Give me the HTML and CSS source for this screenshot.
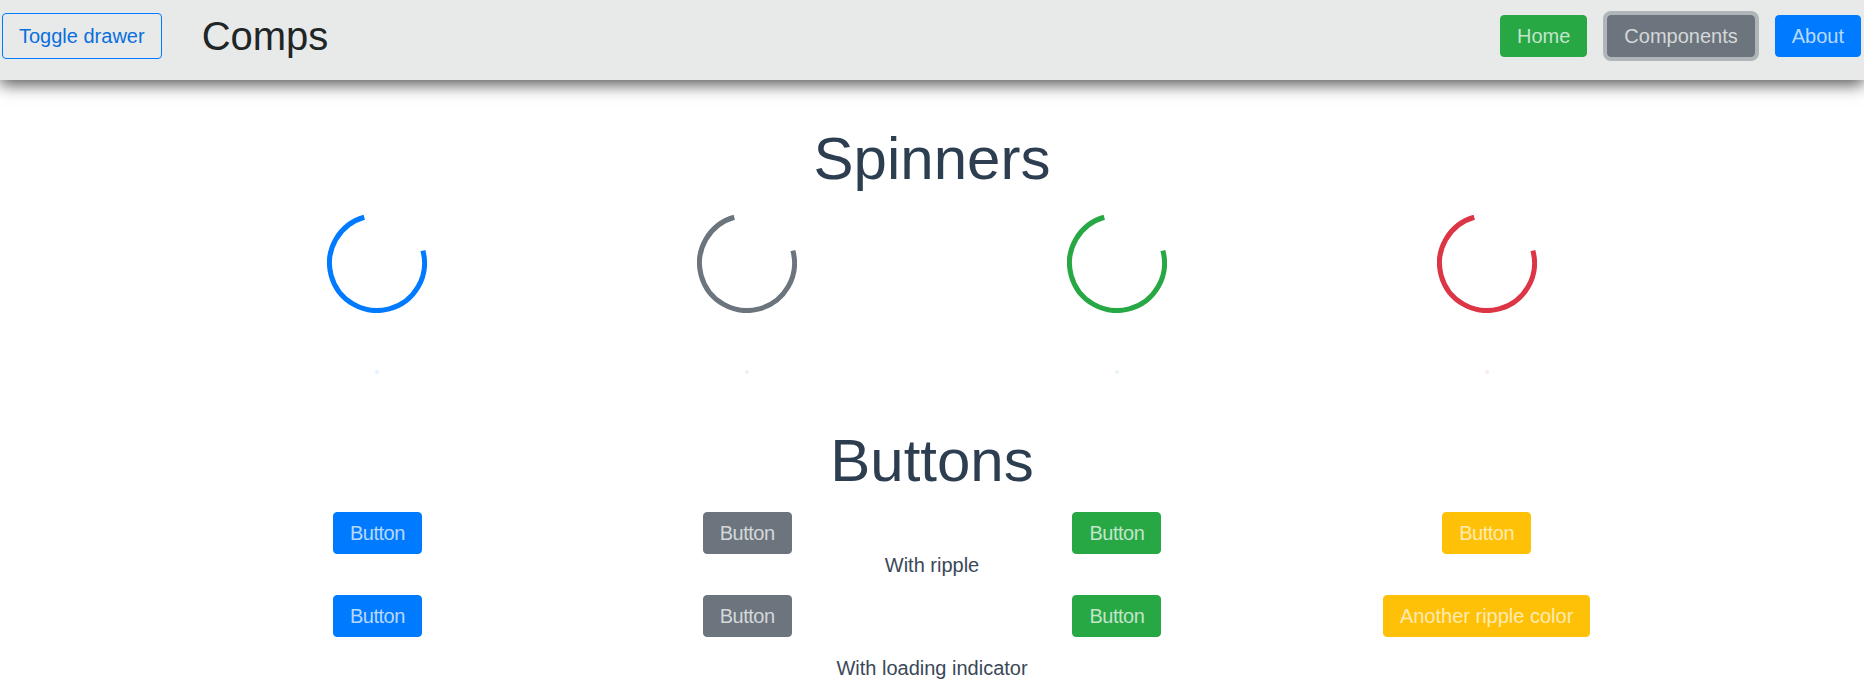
FILE: index.html
```html
<!DOCTYPE html>
<html lang="en">
<head>
<meta charset="utf-8">
<title>Comps</title>
<link rel="stylesheet" href="styles.css">
</head>
<body>
<nav class="navbar">
  <button class="btn btn-outline">Toggle drawer</button>
  <span class="brand">Comps</span>
  <div class="nav-links">
    <button class="btn btn-green">Home</button>
    <button class="btn btn-gray btn-focus">Components</button>
    <button class="btn btn-blue">About</button>
  </div>
</nav>
<main class="main">
  <h1 class="section-title">Spinners</h1>
  <div class="grid spinner-grid">
    <div class="spin-cell">
      <svg class="spinner spin-blue" width="100" height="100" viewBox="0 0 100 100"><circle cx="50" cy="50" r="47.5" transform="rotate(-15 50 50)"/></svg>
      <span class="dot dot-blue"></span>
    </div>
    <div class="spin-cell">
      <svg class="spinner spin-gray" width="100" height="100" viewBox="0 0 100 100"><circle cx="50" cy="50" r="47.5" transform="rotate(-15 50 50)"/></svg>
      <span class="dot dot-gray"></span>
    </div>
    <div class="spin-cell">
      <svg class="spinner spin-green" width="100" height="100" viewBox="0 0 100 100"><circle cx="50" cy="50" r="47.5" transform="rotate(-15 50 50)"/></svg>
      <span class="dot dot-green"></span>
    </div>
    <div class="spin-cell">
      <svg class="spinner spin-red" width="100" height="100" viewBox="0 0 100 100"><circle cx="50" cy="50" r="47.5" transform="rotate(-15 50 50)"/></svg>
      <span class="dot dot-red"></span>
    </div>
  </div>

  <h1 class="section-title buttons-title">Buttons</h1>
  <div class="grid btn-row first-row">
    <div class="cell"><button class="btn btn-blue btn-short">Button</button></div>
    <div class="cell"><button class="btn btn-gray btn-short">Button</button></div>
    <div class="cell"><button class="btn btn-green btn-short">Button</button></div>
    <div class="cell"><button class="btn btn-yellow btn-short">Button</button></div>
  </div>
  <p class="caption">With ripple</p>
  <div class="grid btn-row second-row">
    <div class="cell"><button class="btn btn-blue btn-short">Button</button></div>
    <div class="cell"><button class="btn btn-gray btn-short">Button</button></div>
    <div class="cell"><button class="btn btn-green btn-short">Button</button></div>
    <div class="cell"><button class="btn btn-yellow">Another ripple color</button></div>
  </div>
  <p class="caption caption-last">With loading indicator</p>
</main>
</body>
</html>
```

FILE: styles.css
```css
* { box-sizing: border-box; }

html, body {
  margin: 0;
  padding: 0;
  background: #ffffff;
}

body {
  font-family: "Liberation Sans", Arial, Helvetica, sans-serif;
  color: #2c3e50;
  overflow: hidden;
}

.navbar {
  height: 80px;
  display: flex;
  align-items: center;
  padding: 0 3px 8px 2px;
  background: #e8e9e9;
  box-shadow: 0 5px 15px rgba(0, 0, 0, 0.65);
  position: relative;
  z-index: 2;
}

.btn {
  font-family: "Liberation Sans", Arial, Helvetica, sans-serif;
  font-size: 20px;
  line-height: 30px;
  padding: 5px 16px;
  border: 1px solid transparent;
  border-radius: 4px;
  cursor: pointer;
  color: rgba(255, 255, 255, 0.72);
  white-space: nowrap;
}

.btn-short {
  letter-spacing: -0.5px;
}

.btn-outline {
  padding: 7px 16px;
  background: transparent;
  border-color: #007bff;
  color: #0a6fdc;
}

.brand {
  margin-left: 40px;
  font-size: 40px;
  line-height: 48px;
  color: #1f2626;
}

.nav-links {
  margin-left: auto;
  display: flex;
  gap: 20px;
  align-items: center;
}

.btn-blue { background: #007bff; border-color: #007bff; }
.btn-gray { background: #6c757d; border-color: #6c757d; }
.btn-green { background: #28a745; border-color: #28a745; }
.btn-yellow { background: #ffc107; border-color: #ffc107; color: rgba(255, 255, 255, 0.7); }

.btn-focus {
  box-shadow: 0 0 0 4px rgba(130, 138, 145, 0.55);
}

.main {
  width: 1479px;
  margin: 0 auto;
  text-align: center;
}

.section-title {
  margin: 43px 0 0;
  font-size: 60px;
  line-height: 72px;
  font-weight: 400;
  color: #2c3e50;
}

.grid {
  display: grid;
  grid-template-columns: repeat(4, 1fr);
}

.spinner-grid {
  margin-top: 18px;
}

.spin-cell {
  display: flex;
  flex-direction: column;
  align-items: center;
}

.spinner {
  display: block;
}

.spinner circle {
  fill: none;
  stroke-width: 5;
  stroke-dasharray: 223 76;
}

.spin-blue circle { stroke: #007bff; }
.spin-gray circle { stroke: #6c757d; }
.spin-green circle { stroke: #28a745; }
.spin-red circle { stroke: #dc3545; }

.dot {
  display: block;
  width: 4px;
  height: 4px;
  border-radius: 50%;
  margin-top: 57px;
}

.dot-blue { background: rgba(0, 123, 255, 0.1); }
.dot-gray { background: rgba(108, 117, 125, 0.1); }
.dot-green { background: rgba(40, 167, 69, 0.1); }
.dot-red { background: rgba(220, 53, 69, 0.1); }

.buttons-title {
  margin-top: 51px;
}

.cell {
  display: flex;
  justify-content: center;
}

.first-row { margin-top: 15px; }
.second-row { margin-top: 18px; }

.caption {
  margin: 0;
  font-size: 20px;
  line-height: 23px;
  color: #3a4858;
}

.caption-last {
  margin-top: 20px;
}
```
